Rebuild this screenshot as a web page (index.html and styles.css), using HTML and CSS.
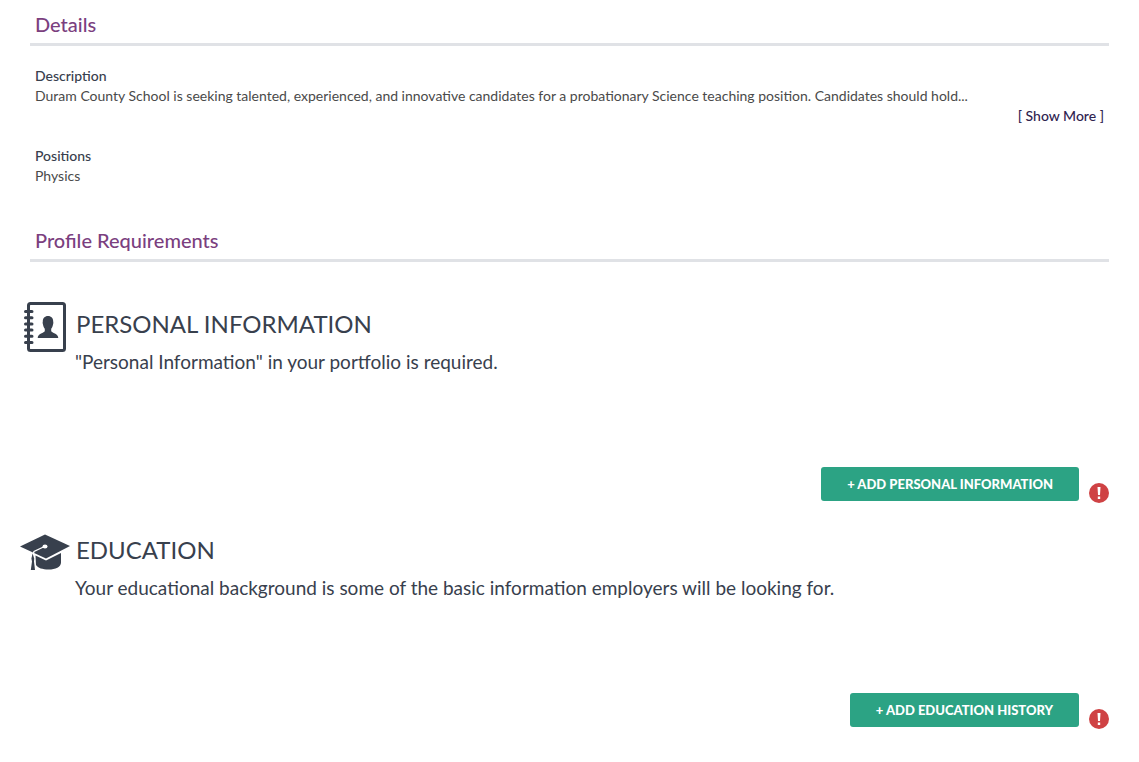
FILE: index.html
```html
<!DOCTYPE html>
<html lang="en">
<head>
  <meta charset="UTF-8" />
  <meta name="viewport" content="width=device-width, initial-scale=1" />
  <title>Job Details</title>
  <link rel="stylesheet" href="styles.css">
</head>
<body>
  <main class="page">
    <!-- Details -->
    <section class="details">
      <h2 class="section-title">Details</h2>
      <div class="field">
        <h3 class="field-label">Description</h3>
        <p class="field-text">Duram County School is seeking talented, experienced, and innovative candidates for a probationary Science teaching position. Candidates should hold...</p>
        <a class="show-more" href="#">[ Show More ]</a>
      </div>
      <div class="field">
        <h3 class="field-label">Positions</h3>
        <p class="field-text">Physics</p>
      </div>
    </section>

    <!-- Profile requirements -->
    <section class="requirements">
      <h2 class="section-title">Profile Requirements</h2>

      <article class="requirement">
        <div class="requirement-head">
          <svg class="icon" viewBox="0 0 50 50" aria-hidden="true">
            <rect x="8.5" y="1.5" width="36" height="47" rx="2" fill="none" stroke="currentColor" stroke-width="3"/>
            <path d="M5.500 9.5h6.500M5.500 15.7h6.500M5.500 21.9h6.500M5.500 28.1h6.500M5.500 34.3h6.500M5.500 40.5h6.500" stroke="currentColor" stroke-width="3" stroke-linecap="round"/>
            <path d="M28 14c-3.300 0-5.200 2.300-5.200 5.500 0 .7-.4 1.200 0 2.200.5 2.800 1.200 4.200 2 5v2.300c-.5 2.200-7.100 2.200-7.100 7h20.600c0-4.800-6.600-4.800-7.100-7v-2.300c.8-.8 1.500-2.200 2-5 .4-1 0-1.500 0-2.200 0-3.200-1.900-5.500-5.200-5.500z" fill="currentColor"/>
          </svg>
          <div>
            <h3 class="requirement-title">PERSONAL INFORMATION</h3>
            <p class="requirement-text">"Personal Information" in your portfolio is required.</p>
          </div>
        </div>
        <div class="requirement-actions">
          <button class="btn" type="button">+ ADD PERSONAL INFORMATION</button>
          <svg class="alert" viewBox="0 0 20 20" role="img" aria-label="Required">
            <circle cx="10" cy="10" r="10" fill="#cf4244"/>
            <path d="M8.500 4h3l-.5 8H9zM8.800 13.500h2.400v2.400H8.800z" fill="#fff"/>
          </svg>
        </div>
      </article>

      <article class="requirement">
        <div class="requirement-head">
          <svg class="icon" viewBox="0 0 50 50" aria-hidden="true">
            <path d="M15.500 27.500L26 32.500 41 25v9.500c0 4.500-5.500 7-12.500 7-6 0-10.500-1.500-12.500-4.500z" fill="currentColor"/>
            <path d="M25 6.500L50 18 26 30.500 0 18.500z" fill="currentColor"/>
            <path d="M24.500 18.500L14 23.500l-1 3" fill="none" stroke="#fff" stroke-width="1.300"/>
            <ellipse cx="25" cy="18.500" rx="2.500" ry="1.900" fill="#fff"/>
            <path d="M12.600 25.500l-1.200 5 .6 3-1.200 8.500h4.200l-1-8.500.2-3z" fill="currentColor"/>
          </svg>
          <div>
            <h3 class="requirement-title">EDUCATION</h3>
            <p class="requirement-text">Your educational background is some of the basic information employers will be looking for.</p>
          </div>
        </div>
        <div class="requirement-actions">
          <button class="btn" type="button">+ ADD EDUCATION HISTORY</button>
          <svg class="alert" viewBox="0 0 20 20" role="img" aria-label="Required">
            <circle cx="10" cy="10" r="10" fill="#cf4244"/>
            <path d="M8.500 4h3l-.5 8H9zM8.800 13.500h2.400v2.400H8.800z" fill="#fff"/>
          </svg>
        </div>
      </article>
    </section>
  </main>
</body>
</html>
```
FILE: styles.css
```css
:root {
  --text: #38404d;
  --muted: #4a4a4a;
  --purple: #7b3f7f;
  --green: #2ca384;
  --line: #e0e2e6;
}
* { box-sizing: border-box; }
body {
  margin: 0;
  background: #fff;
  color: var(--text);
  font-family: Lato, "Liberation Sans", sans-serif;
  font-size: 14px;
  line-height: 20px;
}
h2, h3, p { margin: 0; }

.page { padding: 10px 30px 24px; }

/* ===== Sections ===== */
.section-title {
  padding: 0 5px 5px;
  border-bottom: 3px solid var(--line);
  color: var(--purple);
  font-size: 20px;
  font-weight: 500;
  line-height: 28px;
}

/* ===== Details ===== */
.details { padding-bottom: 40px; }
.field { display: flex; flex-direction: column; padding: 20px 5px 0; }
.field-label { font-size: 14px; font-weight: 500; }
.field-text { color: var(--muted); }
.show-more { align-self: flex-end; color: #2f2350; font-weight: 500; text-decoration: none; }

/* ===== Requirements ===== */
.requirement { padding-top: 40px; }
.requirement + .requirement { padding-top: 25px; }
.requirement-head { display: flex; gap: 5px; margin-left: -10px; }
.icon { flex: none; width: 50px; height: 50px; }
.requirement-title { padding-left: 1px; font-size: 24px; font-weight: 400; line-height: 44px; }
.requirement-text { font-size: 19px; line-height: 32px; }
.requirement-actions { display: flex; justify-content: flex-end; align-items: flex-end; gap: 10px; margin-top: 89px; }
.btn {
  height: 34px;
  margin-bottom: 2px;
  padding: 0 26px;
  border: none;
  border-radius: 3px;
  background: var(--green);
  color: #fff;
  font: 900 13px Lato, "Liberation Sans", sans-serif;
  cursor: pointer;
}
.btn:hover { opacity: .9; }
.alert { width: 20px; height: 20px; }
```
